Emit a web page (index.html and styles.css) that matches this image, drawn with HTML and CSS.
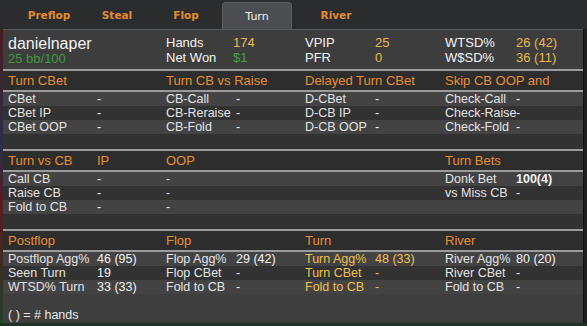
FILE: index.html
```html
<!DOCTYPE html>
<html lang="en">
<head>
    <meta charset="UTF-8">
    <title>Player Stats - Turn</title>
    <link rel="stylesheet" href="styles.css">
</head>
<body>
    <div class="tabs">
        <div class="tab">Preflop</div>
        <div class="tab">Steal</div>
        <div class="tab">Flop</div>
        <div class="tab active">Turn</div>
        <div class="tab">River</div>
    </div>

    <div class="frame">
        <div class="panel">
            <div class="info">
                <div class="player">
                    <div class="name">danielnaper</div>
                    <div class="winrate">25 bb/100</div>
                </div>
                <span class="label">Hands</span><span class="gold">174</span>
                <span class="label">VPIP</span><span class="gold">25</span>
                <span class="label">WTSD%</span><span class="gold">26 (42)</span>
                <span class="label">Net Won</span><span class="green">$1</span>
                <span class="label">PFR</span><span class="gold">0</span>
                <span class="label">W$SD%</span><span class="gold">36 (11)</span>
            </div>

            <div class="section-head">
                <span class="span2">Turn CBet</span>
                <span class="span2">Turn CB vs Raise</span>
                <span class="span2">Delayed Turn CBet</span>
                <span class="span2">Skip CB OOP and</span>
            </div>
            <div class="row light">
                <span>CBet</span><span>-</span>
                <span>CB-Call</span><span>-</span>
                <span>D-CBet</span><span>-</span>
                <span>Check-Call</span><span>-</span>
            </div>
            <div class="row dark">
                <span>CBet IP</span><span>-</span>
                <span>CB-Reraise</span><span>-</span>
                <span>D-CB IP</span><span>-</span>
                <span>Check-Raise</span><span>-</span>
            </div>
            <div class="row light">
                <span>CBet OOP</span><span>-</span>
                <span>CB-Fold</span><span>-</span>
                <span>D-CB OOP</span><span>-</span>
                <span>Check-Fold</span><span>-</span>
            </div>
            <div class="spacer"></div>

            <div class="section-head">
                <span>Turn vs CB</span><span>IP</span>
                <span>OOP</span><span></span>
                <span></span><span></span>
                <span class="span2">Turn Bets</span>
            </div>
            <div class="row light">
                <span>Call CB</span><span>-</span>
                <span>-</span><span></span>
                <span></span><span></span>
                <span>Donk Bet</span><span class="strong">100(4)</span>
            </div>
            <div class="row dark">
                <span>Raise CB</span><span>-</span>
                <span>-</span><span></span>
                <span></span><span></span>
                <span>vs Miss CB</span><span>-</span>
            </div>
            <div class="row light">
                <span>Fold to CB</span><span>-</span>
                <span>-</span><span></span>
                <span></span><span></span>
                <span></span><span></span>
            </div>
            <div class="spacer"></div>

            <div class="section-head">
                <span class="span2">Postflop</span>
                <span class="span2">Flop</span>
                <span class="span2">Turn</span>
                <span class="span2">River</span>
            </div>
            <div class="row light">
                <span>Postflop Agg%</span><span>46 (95)</span>
                <span>Flop Agg%</span><span>29 (42)</span>
                <span class="gold">Turn Agg%</span><span class="gold">48 (33)</span>
                <span>River Agg%</span><span>80 (20)</span>
            </div>
            <div class="row dark">
                <span>Seen Turn</span><span>19</span>
                <span>Flop CBet</span><span>-</span>
                <span class="gold">Turn CBet</span><span class="gold">-</span>
                <span>River CBet</span><span>-</span>
            </div>
            <div class="row light">
                <span>WTSD% Turn</span><span>33 (33)</span>
                <span>Fold to CB</span><span>-</span>
                <span class="gold">Fold to CB</span><span class="gold">-</span>
                <span>Fold to CB</span><span>-</span>
            </div>

            <div class="footer">( ) = # hands</div>
        </div>
        <div class="edge"></div>
    </div>
</body>
</html>
```

FILE: styles.css
```css
body {
    margin: 0;
    width: 587px;
    height: 326px;
    overflow: hidden;
    background: #1d3324;
    font-family: "Liberation Sans", Arial, sans-serif;
    font-size: 12px;
    color: #e4e4e4;
}
.tabs {
    display: grid;
    grid-template-columns: 70px 66px 72px 70px 88px;
    height: 29px;
    padding-left: 14px;
    background: #2b2c2e;
}
.tab {
    margin-top: 2px;
    line-height: 27px;
    text-align: center;
    font-family: "DejaVu Sans", sans-serif;
    font-weight: bold;
    font-size: 10.5px;
    color: #e38d2d;
}
.tab.active {
    background: #4b4d50;
    border: 1px solid #5b5d60;
    border-bottom: none;
    border-radius: 4px 4px 0 0;
    color: #f2f2f2;
    font-weight: normal;
    font-size: 11px;
}
.frame {
    display: flex;
    height: 294px;
    background: linear-gradient(180deg, #4a1c20 0%, #2a2f48 40%, #5a1a1e 60%, #21402a 100%);
    padding-left: 3px;
}
.panel {
    width: 580px;
    background: #3d3d3e;
    border-top: 1px solid #58595b;
}
.edge {
    flex: 1;
    background: #1e1f21;
    border-left: 1px solid #111;
}
.info {
    display: grid;
    grid-template-columns: 158px 67px 72px 70px 70px 71px 1fr;
    grid-auto-rows: 15px;
    align-content: center;
    height: 39px;
    padding-left: 5px;
    border-bottom: 2px solid #9c9c9c;
    font-size: 13px;
    color: #f4f4f4;
}
.player {
    grid-row: span 2;
}
.name {
    font-size: 16px;
    line-height: 17px;
    color: #f2f2f2;
}
.winrate {
    font-size: 13px;
    line-height: 14px;
    color: #3f9a3f;
}
.gold {
    color: #eab94a;
}
.green {
    color: #43a043;
}
.section-head,
.row {
    display: grid;
    grid-template-columns: 89px 69px 70px 69px 70px 70px 71px 1fr;
    padding-left: 5px;
    white-space: nowrap;
}
.section-head {
    height: 19px;
    line-height: 19px;
    background: #2d2d2e;
    border-bottom: 2px solid #9c9c9c;
    font-size: 13px;
    color: #e88f2c;
}
.span2 {
    grid-column: span 2;
}
.row {
    height: 14px;
    line-height: 14px;
    font-size: 12.5px;
}
.row.light {
    background: #434344;
}
.row.dark {
    background: #323233;
}
.row span:nth-child(even) {
    color: #f4f4f4;
}
.row .gold,
.row span.gold:nth-child(even) {
    color: #f0c04a;
}
.strong {
    font-weight: bold;
}
.spacer {
    height: 15px;
    background: #323233;
    border-bottom: 2px solid #9c9c9c;
}
.footer {
    height: 28px;
    padding: 14px 0 0 5px;
    box-sizing: border-box;
    line-height: 14px;
    font-size: 12.5px;
    color: #e8e8e8;
    background: #3e3e3f;
}
```
